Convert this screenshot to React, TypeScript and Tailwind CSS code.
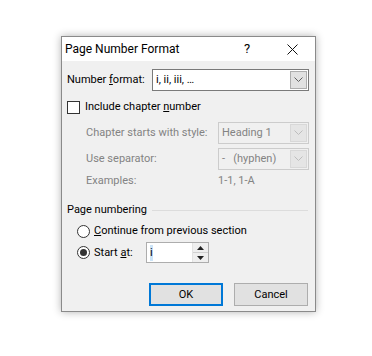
import React from "react";

const font = { fontFamily: 'Roboto, "Noto Sans", sans-serif' };

function Chevron({ disabled }: { disabled?: boolean }) {
  return (
    <svg width="9" height="6" viewBox="0 0 9 6">
      <path d="M0.5 0.5 L4.5 4.5 L8.5 0.5" fill="none" stroke={disabled ? "#bdbdbd" : "#606060"} strokeWidth="1" />
    </svg>
  );
}

function Combo({ value, disabled, w }: { value: string; disabled?: boolean; w: string }) {
  return (
    <div
      className={`flex h-[22px] ${w} shrink-0 items-stretch border ${disabled ? "border-[#cccccc] bg-[#f0f0f0] text-[#838383]" : "border-[#7a7a7a] bg-white text-black"}`}
    >
      <div className="flex flex-1 items-center whitespace-pre pl-[3px]">{value}</div>
      <div
        className={`m-[1px] flex w-[17px] items-center justify-center border ${disabled ? "border-[#d8d8d8] bg-[#e5e5e5]" : "border-[#adadad] bg-[#e1e1e1]"}`}
      >
        <Chevron disabled={disabled} />
      </div>
    </div>
  );
}

export default function App() {
  return (
    <div className="h-[356px] w-[372px] whitespace-nowrap bg-white text-[11px] leading-[16px]" style={font}>
      <div className="pl-[61px] pt-[36px]">
        <div className="flex h-[276px] w-[255px] flex-col border border-[#8a8a8a] shadow-[0_0_8px_rgba(0,0,0,0.3)]">
          {/* title bar */}
          <div className="flex h-[24px] items-center bg-white pl-[3px] text-[12px] text-black">
            <span className="flex-1">Page Number Format</span>
            <span className="w-[44px] text-center text-[13px]">?</span>
            <span className="flex w-[46px] justify-center">
              <svg width="11" height="11" viewBox="0 0 11 11">
                <path d="M0.5 0.5 L10.5 10.5 M10.5 0.5 L0.5 10.5" stroke="#111" strokeWidth="1" />
              </svg>
            </span>
          </div>
          {/* body */}
          <div className="flex flex-1 flex-col bg-[#f0f0f0] pl-[5px] pr-[6px] text-black">
            <div className="mt-[8px] flex h-[22px] items-center">
              <span className="w-[85px] shrink-0">
                Number <u>f</u>ormat:
              </span>
              <Combo value="i, ii, iii, …" w="w-[157px]" />
            </div>
            <div className="mt-[9px] flex h-[14px] items-center">
              <span className="h-[13px] w-[13px] border border-[#333333] bg-white" />
              <span className="ml-[5px]">
                Include chapter <u>n</u>umber
              </span>
            </div>
            <div className="ml-[19px] text-[#838383]">
              <div className="mt-[8px] flex h-[22px] items-center">
                <span className="w-[132px] shrink-0">Chapter starts with style:</span>
                <Combo value="Heading 1" disabled w="w-[91px]" />
              </div>
              <div className="mt-[4px] flex h-[22px] items-center">
                <span className="w-[132px] shrink-0">Use separator:</span>
                <Combo value="-   (hyphen)" disabled w="w-[91px]" />
              </div>
              <div className="mt-[3px] flex h-[16px] items-center">
                <span className="w-[132px] shrink-0">Examples:</span>
                <span>1-1, 1-A</span>
              </div>
            </div>
            <div className="mt-[13px] flex h-[16px] items-center">
              <span>Page numbering</span>
              <span className="ml-[5px] mr-[1px] h-px flex-1 bg-[#dcdcdc]" />
            </div>
            <div className="ml-[10px] mt-[5px] flex h-[16px] items-center">
              <span className="h-[13px] w-[13px] rounded-full border border-[#333333] bg-white" />
              <span className="ml-[4px]">
                <u>C</u>ontinue from previous section
              </span>
            </div>
            <div className="ml-[10px] mt-[3px] flex h-[21px] items-center">
              <span className="flex h-[13px] w-[13px] items-center justify-center rounded-full border border-[#333333] bg-white">
                <span className="h-[7px] w-[7px] rounded-full bg-[#333333]" />
              </span>
              <span className="ml-[4px] w-[52px]">
                Start <u>a</u>t:
              </span>
              <div className="flex h-[21px] w-[63px] items-stretch border border-[#adadad] bg-white">
                <div className="flex flex-1 items-center pl-[3px]">
                  <span className="bg-[#cce4f7]">i</span>
                </div>
                <div className="flex w-[16px] flex-col border-l border-[#e3e3e3]">
                  <div className="flex flex-1 items-center justify-center border-b border-[#d0d0d0] bg-[#efefef]">
                    <svg width="7" height="4" viewBox="0 0 7 4"><path d="M3.5 0 L7 4 L0 4 Z" fill="#222" /></svg>
                  </div>
                  <div className="flex flex-1 items-center justify-center bg-[#efefef]">
                    <svg width="7" height="4" viewBox="0 0 7 4"><path d="M0 0 L7 0 L3.5 4 Z" fill="#222" /></svg>
                  </div>
                </div>
              </div>
            </div>
            <div className="mt-[20px] flex justify-end gap-[11px] pr-[1px]">
              <button className="flex h-[23px] w-[74px] items-center justify-center border-2 border-[#0078d7] bg-[#e1e1e1]">
                OK
              </button>
              <button className="flex h-[23px] w-[74px] items-center justify-center border border-[#adadad] bg-[#e1e1e1]">
                Cancel
              </button>
            </div>
          </div>
        </div>
      </div>
    </div>
  );
}
